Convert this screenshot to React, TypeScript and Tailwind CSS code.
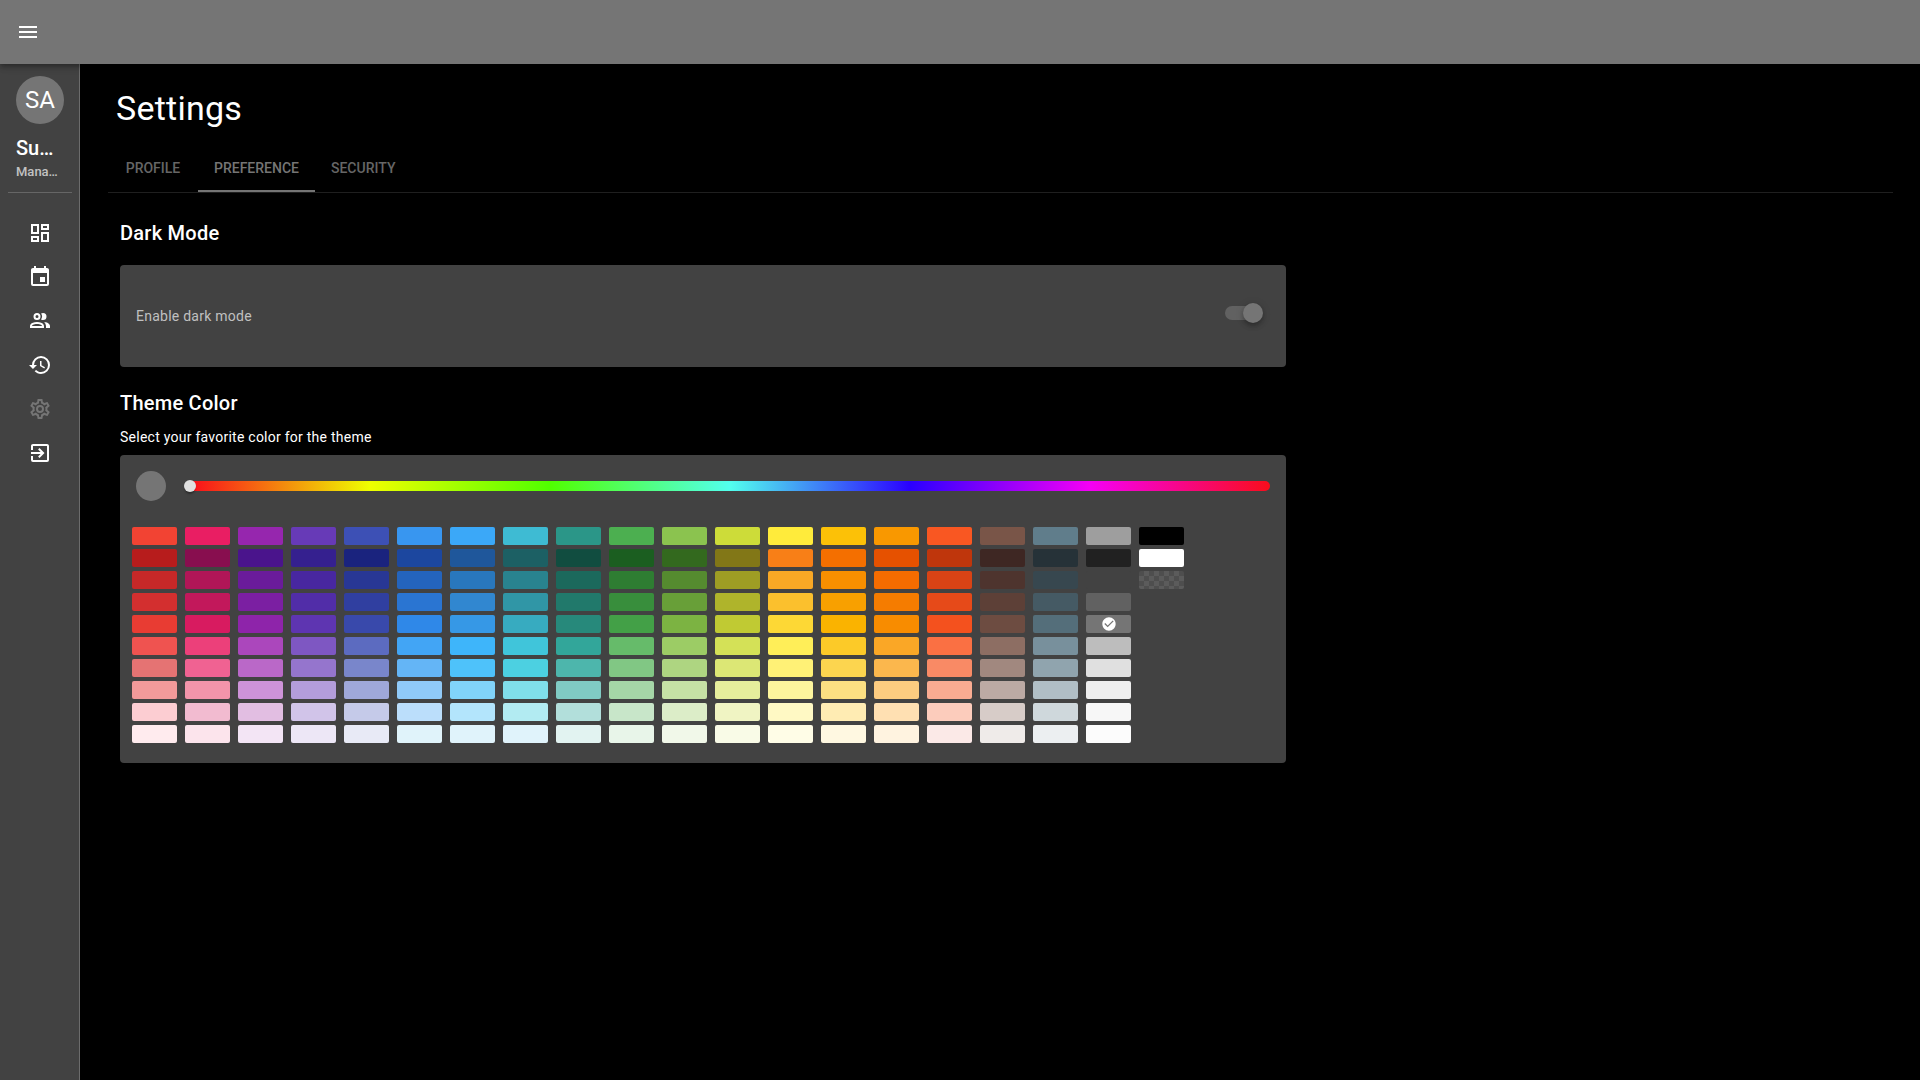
import { useState } from "react";

const icons = {
  menu: "M3,6H21V8H3V6M3,11H21V13H3V11M3,16H21V18H3V16Z",
  dashboard:
    "M19,5V7H15V5H19M9,5V11H5V5H9M19,13V19H15V13H19M9,17V19H5V17H9M21,3H13V9H21V3M11,3H3V13H11V3M21,11H13V21H21V11M11,15H3V21H11V15Z",
  calendar:
    "M19,19H5V8H19M16,1V3H8V1H6V3H5C3.89,3 3,3.89 3,5V19A2,2 0 0,0 5,21H19A2,2 0 0,0 21,19V5C21,3.89 20.1,3 19,3H18V1M17,12H12V17H17V12Z",
  people:
    "M13.07 10.41A5 5 0 0 0 13.07 4.59A3.39 3.39 0 0 1 15 4A3.5 3.5 0 0 1 15 11A3.39 3.39 0 0 1 13.07 10.41M5.5 7.5A3.5 3.5 0 1 1 9 11A3.5 3.5 0 0 1 5.5 7.5M7.5 7.5A1.5 1.5 0 1 0 9 6A1.5 1.5 0 0 0 7.5 7.5M16 17V19H2V17S2 13 9 13 16 17 16 17M14 17C13.86 16.22 12.67 15 9 15S4.07 16.31 4 17M15.95 13A5.32 5.32 0 0 1 18 17V19H22V17S22 13.37 15.94 13Z",
  history:
    "M13.5,8H12V13L16.28,15.54L17,14.33L13.5,12.25V8M13,3A9,9 0 0,0 4,12H1L4.96,16.03L9,12H6A7,7 0 0,1 13,5A7,7 0 0,1 20,12A7,7 0 0,1 13,19C11.07,19 9.32,18.21 8.06,16.94L6.64,18.36C8.27,20 10.5,21 13,21A9,9 0 0,0 22,12A9,9 0 0,0 13,3",
  cog: "M12,8A4,4 0 0,1 16,12A4,4 0 0,1 12,16A4,4 0 0,1 8,12A4,4 0 0,1 12,8M12,10A2,2 0 0,0 10,12A2,2 0 0,0 12,14A2,2 0 0,0 14,12A2,2 0 0,0 12,10M10,22C9.75,22 9.54,21.82 9.5,21.58L9.13,18.93C8.5,18.68 7.96,18.34 7.44,17.94L4.95,18.95C4.73,19.03 4.46,18.95 4.34,18.73L2.34,15.27C2.21,15.05 2.27,14.78 2.46,14.63L4.57,12.97L4.5,12L4.57,11L2.46,9.37C2.27,9.22 2.21,8.95 2.34,8.73L4.34,5.27C4.46,5.05 4.73,4.96 4.95,5.05L7.44,6.05C7.96,5.66 8.5,5.32 9.13,5.07L9.5,2.42C9.54,2.18 9.75,2 10,2H14C14.25,2 14.46,2.18 14.5,2.42L14.87,5.07C15.5,5.32 16.04,5.66 16.56,6.05L19.05,5.05C19.27,4.96 19.54,5.05 19.66,5.27L21.66,8.73C21.79,8.95 21.73,9.22 21.54,9.37L19.43,11L19.5,12L19.43,13L21.54,14.63C21.73,14.78 21.79,15.05 21.66,15.27L19.66,18.73C19.54,18.95 19.27,19.04 19.05,18.95L16.56,17.95C16.04,18.34 15.5,18.68 14.87,18.93L14.5,21.58C14.46,21.82 14.25,22 14,22H10M11.25,4L10.88,6.61C9.68,6.86 8.62,7.5 7.85,8.39L5.44,7.35L4.69,8.6L6.8,10.15C6.4,11.37 6.4,12.64 6.8,13.85L4.68,15.41L5.43,16.66L7.86,15.62C8.63,16.5 9.68,17.14 10.87,17.38L11.24,20H12.76L13.13,17.39C14.32,17.14 15.37,16.5 16.14,15.62L18.57,16.66L19.32,15.41L17.2,13.86C17.6,12.64 17.6,11.37 17.2,10.15L19.31,8.6L18.56,7.35L16.15,8.39C15.38,7.5 14.32,6.86 13.12,6.62L12.75,4H11.25Z",
  exit: "M19,3H5C3.89,3 3,3.89 3,5V9H5V5H19V19H5V15H3V19A2,2 0 0,0 5,21H19A2,2 0 0,0 21,19V5C21,3.89 20.1,3 19,3M10.08,15.58L11.5,17L16.5,12L11.5,7L10.08,8.41L12.67,11H3V13H12.67L10.08,15.58Z",
  check:
    "M12 2C6.5 2 2 6.5 2 12S6.5 22 12 22 22 17.5 22 12 17.5 2 12 2M10 17L5 12L6.41 10.59L10 14.17L17.59 6.58L19 8L10 17Z",
};

function Icon({ path, className }: { path: string; className: string }) {
  return (
    <svg viewBox="0 0 24 24" fill="currentColor" aria-hidden="true" className={className}>
      <path d={path} />
    </svg>
  );
}

const navItems = [
  { label: "Dashboard", path: icons.dashboard, active: false },
  { label: "Calendar", path: icons.calendar, active: false },
  { label: "Users", path: icons.people, active: false },
  { label: "History", path: icons.history, active: false },
  { label: "Settings", path: icons.cog, active: true },
  { label: "Log out", path: icons.exit, active: false },
];

const tabs = ["PROFILE", "PREFERENCE", "SECURITY"];

// Each column runs: base, darken 4-1, lighten 1-5.
const swatches: string[][] = [
  ["#f24333", "#b71c1c", "#c62828", "#d32f2f", "#e83c33", "#ef5350", "#e57373", "#f29a9a", "#fccdd2", "#ffebee"],
  ["#e91e63", "#880e4f", "#b01657", "#c2185b", "#d81b60", "#ec407a", "#f06292", "#f294aa", "#f2bbd0", "#fce4ec"],
  ["#9626ae", "#4a148c", "#6a1b9a", "#7b1fa2", "#8e24aa", "#ab47bc", "#ba68c8", "#ce93d8", "#e2bee2", "#f3e5f5"],
  ["#673ab7", "#35208f", "#4827a0", "#512da8", "#5e35b1", "#7e57c2", "#9575cd", "#b39ddb", "#d1c4e9", "#ede7f6"],
  ["#3d50b5", "#1a237e", "#283795", "#303fa0", "#3949ab", "#5c6bc0", "#7986cb", "#9fa8da", "#c5cae9", "#e8eaf6"],
  ["#3896f0", "#1c479f", "#2464bd", "#2a75d2", "#2f88e8", "#42a5f5", "#64b5f6", "#90caf9", "#bbdefb", "#e0f3fa"],
  ["#3ba8f8", "#1f579b", "#2977bd", "#3187d0", "#3698e6", "#3eb5fa", "#4ec2fa", "#81d4fa", "#b3e5fc", "#e0f3fb"],
  ["#3ebbd3", "#1c6064", "#29838f", "#3096a6", "#37abc0", "#40c5da", "#4cd0e1", "#80deea", "#b2ebf2", "#e0f3fb"],
  ["#2b9688", "#114d40", "#1b695c", "#21796b", "#27897b", "#32a69a", "#4db6ac", "#80cbc4", "#b2dfdb", "#e2f3f1"],
  ["#4caf50", "#1b5e20", "#2e7d32", "#388e3c", "#43a047", "#66bb6a", "#81c784", "#a5d6a7", "#c8e6c9", "#e8f5e9"],
  ["#8bc34f", "#33691e", "#558b2f", "#689f38", "#7cb342", "#9ccc65", "#aed581", "#c5e1a5", "#dcedc8", "#f1f8e9"],
  ["#cddc39", "#827717", "#9e9d24", "#afb42b", "#c0ca33", "#d4e157", "#dce775", "#e6ee9c", "#f0f4c3", "#f9fbe7"],
  ["#ffeb3b", "#f87f17", "#f9a825", "#fbc02d", "#fdd835", "#ffee58", "#fff176", "#fdf59d", "#fff9c4", "#fffde7"],
  ["#fcc107", "#f46f00", "#f78f00", "#f8a000", "#fab300", "#fcca28", "#fcd54f", "#fce082", "#ffecb3", "#fff8e1"],
  ["#f99800", "#e65100", "#f56c00", "#f57c00", "#f88c00", "#faa726", "#fbb74d", "#fccc80", "#ffe0b2", "#fff3e0"],
  ["#f95722", "#bf360c", "#d84315", "#e64a19", "#f4511e", "#fa7043", "#f98a65", "#faab91", "#fcccbc", "#fbe9e7"],
  ["#795548", "#3e2723", "#4e342e", "#5d4037", "#6d4c41", "#8d6e63", "#a1887f", "#bcaaa4", "#d7ccc8", "#efebe9"],
  ["#607d8b", "#263238", "#37474f", "#455a64", "#546e7a", "#78909c", "#90a4ae", "#b0bec5", "#cfd8dc", "#eceff1"],
  ["#9e9e9e", "#212121", "#424242", "#616161", "#757575", "#bdbdbd", "#e0e0e0", "#eeeeee", "#f7f7f7", "#fcfcfc"],
  ["#000000", "#ffffff", "transparent"],
];

export default function App() {
  const [tab, setTab] = useState("PREFERENCE");
  const [dark, setDark] = useState(true);
  const [hue, setHue] = useState(0);
  const [color, setColor] = useState("#757575");

  return (
    <div className="flex min-h-screen flex-col bg-black font-['Roboto',sans-serif] text-white">
      <header className="z-10 flex h-16 shrink-0 items-center bg-[#757575] px-4 shadow-[0_2px_4px_-1px_rgba(0,0,0,0.2),0_4px_5px_rgba(0,0,0,0.14),0_1px_10px_rgba(0,0,0,0.12)]">
        <button type="button" aria-label="Toggle menu">
          <Icon path={icons.menu} className="size-6" />
        </button>
      </header>

      <div className="flex grow">
        <aside className="flex w-20 shrink-0 flex-col bg-[#424242] shadow-[inset_-1px_0_0_#6c6c6c]">
          <div className="px-4 pt-3">
            <div className="flex size-12 items-center justify-center rounded-full bg-[#757575] text-2xl">SA</div>
            <div className="mt-3 text-xl leading-6 font-medium">Su…</div>
            <div className="mt-0.5 pb-2.5 text-[13px] leading-5 font-medium text-[#c2c2c2]">Mana…</div>
          </div>
          <hr className="mx-2 border-[#666666]" />
          <nav className="mt-7 flex flex-col items-center gap-5">
            {navItems.map((item) => (
              <a key={item.label} href="#" aria-label={item.label} className={item.active ? "text-[#757575]" : "text-white"}>
                <Icon path={item.path} className="size-6" />
              </a>
            ))}
          </nav>
        </aside>

        <main className="min-w-0 grow pr-[27px] pl-7">
          <h1 className="px-2 pt-6 text-[34px] leading-10 tracking-[0.25px]">Settings</h1>

          <div role="tablist" className="mt-4 box-content flex h-12 border-b border-[#1f1f1f]">
            {tabs.map((name) => (
              <button
                key={name}
                type="button"
                role="tab"
                aria-selected={tab === name}
                onClick={() => setTab(name)}
                className={
                  tab === name
                    ? "min-w-[90px] border-b-2 border-[#757575] px-4 pt-0.5 text-sm font-medium text-[#757575]"
                    : "min-w-[90px] border-b-2 border-transparent px-4 pt-0.5 text-sm font-medium text-[#666666]"
                }
              >
                {name}
              </button>
            ))}
          </div>

          <div className="w-2/3 px-3">
            <section>
              <h2 className="pt-6 text-xl leading-8 font-medium tracking-[0.25px]">Dark Mode</h2>
              <div className="mt-4 flex h-[102px] items-center justify-between rounded bg-[#424242] px-4">
                <label htmlFor="dark-mode" className="text-sm tracking-[0.25px] text-[#c0c0c0]">
                  Enable dark mode
                </label>
                <div className="relative mr-[7px] mb-1.5 flex h-5 w-[38px] items-center">
                  <input
                    id="dark-mode"
                    type="checkbox"
                    role="switch"
                    checked={dark}
                    onChange={(e) => setDark(e.target.checked)}
                    className="peer h-3.5 w-9 appearance-none rounded-full bg-[#616161]"
                  />
                  <span className="pointer-events-none absolute top-0 left-0 size-5 rounded-full bg-[#757575] shadow-[0_2px_4px_-1px_rgba(0,0,0,0.2),0_4px_5px_rgba(0,0,0,0.14),0_1px_10px_rgba(0,0,0,0.12)] peer-checked:left-[18px]" />
                </div>
              </div>
            </section>

            <section>
              <h2 className="mt-5 text-xl leading-8 font-medium tracking-[0.25px]">Theme Color</h2>
              <p className="mt-2 text-sm leading-5 tracking-[0.25px]">Select your favorite color for the theme</p>
              <div className="mt-2 rounded bg-[#424242]">
                <div className="flex items-center gap-6 px-4 pt-4">
                  <div className="size-[30px] shrink-0 rounded-full" style={{ backgroundColor: color }} />
                  <div className="relative h-2.5 grow rounded-r-full bg-[linear-gradient(to_right,#f90d1b_0%,#efff00_16.66%,#50ff00_33.33%,#52ffee_50%,#2a00ff_66.66%,#f500f5_83.33%,#f90d1b_100%)]">
                    <input
                      type="range"
                      aria-label="Hue"
                      min={0}
                      max={360}
                      value={hue}
                      onChange={(e) => setHue(Number(e.target.value))}
                      className="absolute inset-y-0 -left-1.5 h-2.5 w-[calc(100%+12px)] appearance-none bg-transparent [&::-webkit-slider-thumb]:size-3 [&::-webkit-slider-thumb]:appearance-none [&::-webkit-slider-thumb]:rounded-full [&::-webkit-slider-thumb]:bg-[#e0e0e0] [&::-webkit-slider-thumb]:shadow-[0_3px_2px_-1px_rgba(0,0,0,0.35)]"
                    />
                  </div>
                </div>
                <div className="mt-6 flex gap-2 px-3 pt-0.5 pb-5">
                  {swatches.map((column, c) => (
                    <div key={c} className="flex flex-col gap-1">
                      {column.map((value) => (
                        <button
                          key={value}
                          type="button"
                          aria-label={value}
                          onClick={() => setColor(value)}
                          className={
                            value === "transparent"
                              ? "h-[18px] w-[45px] rounded-[2px] bg-[repeating-conic-gradient(#5b5b5b_0_25%,#4e4e4e_0_50%)] bg-size-[10px_10px] bg-top-left"
                              : "flex h-[18px] w-[45px] items-center justify-center rounded-[2px]"
                          }
                          style={value === "transparent" ? undefined : { backgroundColor: value }}
                        >
                          {value === color && <Icon path={icons.check} className="size-4 text-white" />}
                        </button>
                      ))}
                    </div>
                  ))}
                </div>
              </div>
            </section>
          </div>
        </main>
      </div>
    </div>
  );
}
